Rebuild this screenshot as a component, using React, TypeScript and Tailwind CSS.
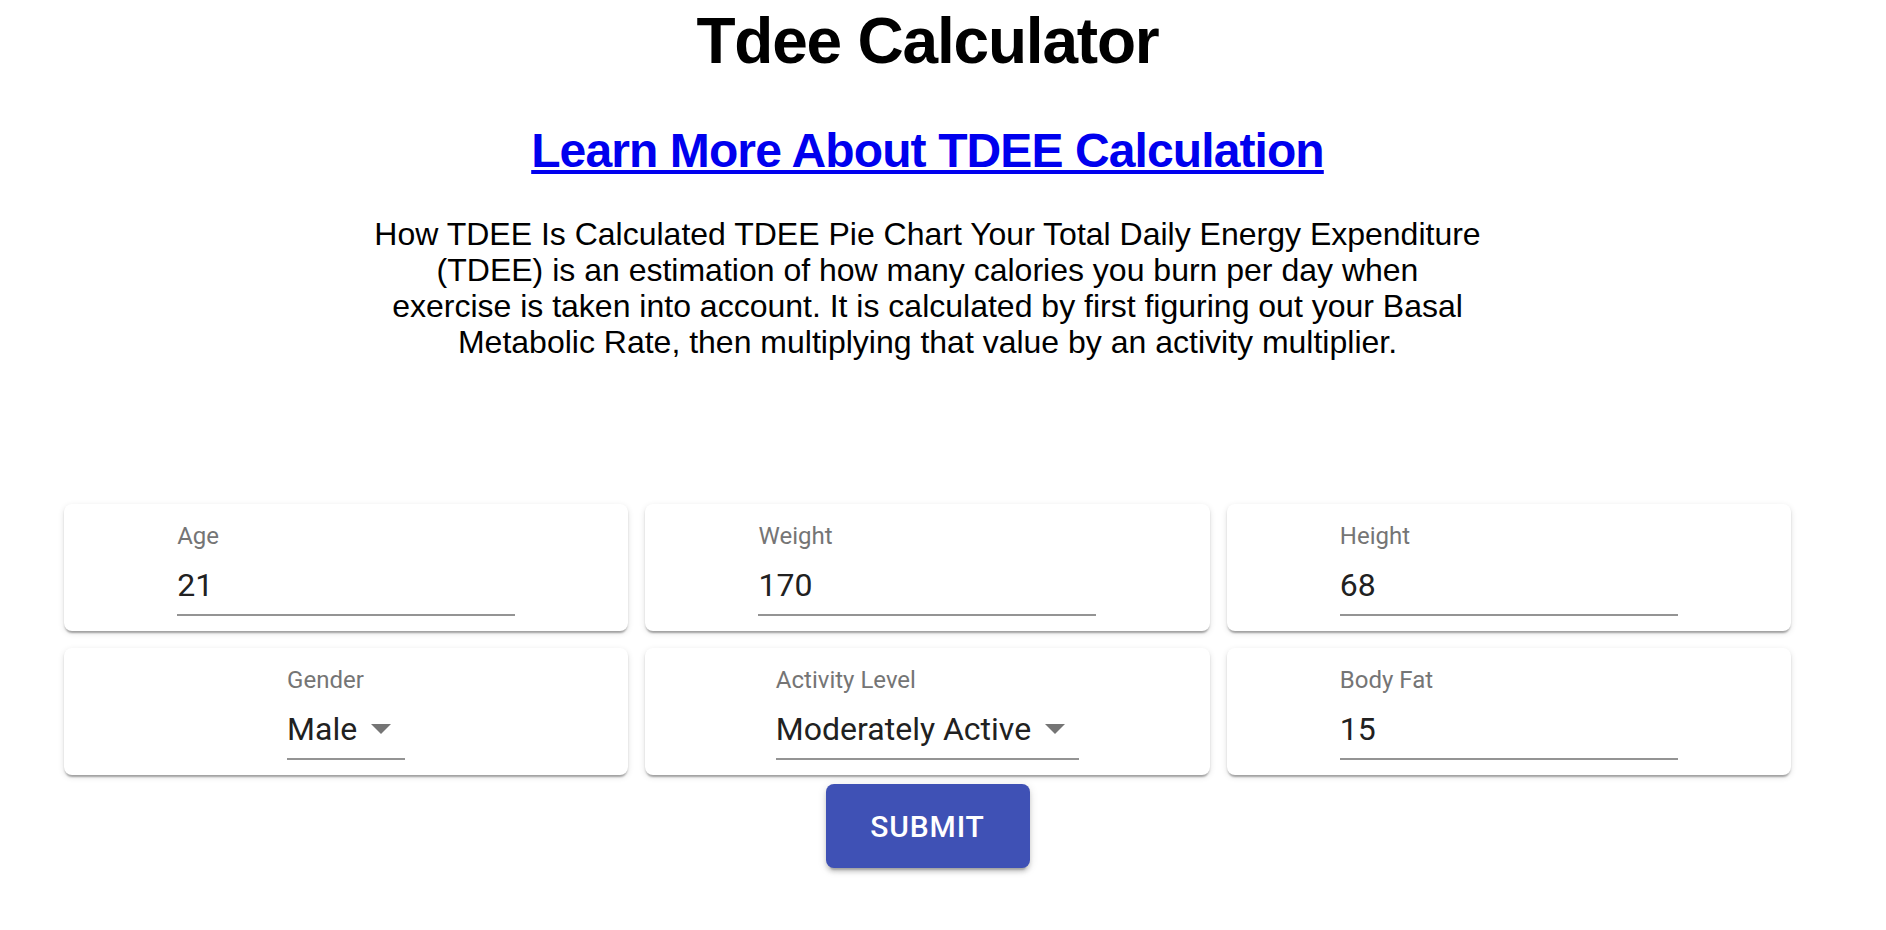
const fields = [
  { label: 'Age', value: '21' },
  { label: 'Weight', value: '170' },
  { label: 'Height', value: '68' },
];

function Card({ children }: { children: React.ReactNode }) {
  return (
    <div className="h-[127px] bg-white rounded-[8px] shadow-[0_4px_2px_-2px_rgba(0,0,0,0.2),0_2px_2px_0_rgba(0,0,0,0.14),0_2px_6px_0_rgba(0,0,0,0.12)] flex justify-center">
      {children}
    </div>
  );
}

function TextField({ label, value }: { label: string; value: string }) {
  return (
    <div className="w-[338px] pt-[20px]">
      <div className="text-[24px] leading-[24px] text-[#757575]">{label}</div>
      <div className="mt-[18px] text-[32px] leading-[38px] text-[#212121] pb-[10px] border-b-2 border-[#949494]">
        {value}
      </div>
    </div>
  );
}

function SelectField({ label, value }: { label: string; value: string }) {
  return (
    <div className="pt-[20px]">
      <div className="text-[24px] leading-[24px] text-[#757575]">{label}</div>
      <div className="relative mt-[18px] pr-[48px] text-[32px] leading-[38px] text-[#212121] pb-[10px] border-b-2 border-[#949494]">
        {value}
        <svg className="absolute right-0 top-[-6px] w-[48px] h-[48px]" viewBox="0 0 24 24">
          <path d="M7 10l5 5 5-5z" fill="rgba(0,0,0,0.54)" />
        </svg>
      </div>
    </div>
  );
}

export default function App() {
  return (
    <div className="w-[1855px] min-h-[930px] bg-white text-center font-['Liberation_Sans',Arial,sans-serif]">
      <h1 className="pt-[4px] text-[64px] leading-[74px] font-bold tracking-[-1.2px] text-black">Tdee Calculator</h1>

      <div className="mt-[45px]">
        <a href="#" className="text-[48px] leading-[56px] font-bold tracking-[-0.9px] text-[#0000ee] underline">
          Learn More About TDEE Calculation
        </a>
      </div>

      <p className="mx-auto mt-[37px] w-[1109px] text-[32px] leading-[36px] text-black">
        How TDEE Is Calculated TDEE Pie Chart Your Total Daily Energy Expenditure (TDEE) is an estimation of how
        many calories you burn per day when exercise is taken into account. It is calculated by first figuring out
        your Basal Metabolic Rate, then multiplying that value by an activity multiplier.
      </p>

      <div className="mt-[144px] px-[64px] grid grid-cols-3 gap-x-[17px] gap-y-[17px] font-['Roboto',sans-serif] text-left">
        {fields.map((f) => (
          <Card key={f.label}>
            <TextField label={f.label} value={f.value} />
          </Card>
        ))}
        <Card>
          <SelectField label="Gender" value="Male" />
        </Card>
        <Card>
          <SelectField label="Activity Level" value="Moderately Active" />
        </Card>
        <Card>
          <TextField label="Body Fat" value="15" />
        </Card>
      </div>

      <div className="mt-[9px] flex justify-center">
        <button className="h-[84px] w-[204px] rounded-[8px] bg-[#3f51b5] text-white font-['Roboto',sans-serif] font-medium text-[30px] tracking-[0.02857em] uppercase shadow-[0_6px_2px_-4px_rgba(0,0,0,0.2),0_4px_4px_0_rgba(0,0,0,0.14),0_2px_10px_0_rgba(0,0,0,0.12)]">
          Submit
        </button>
      </div>
    </div>
  );
}
